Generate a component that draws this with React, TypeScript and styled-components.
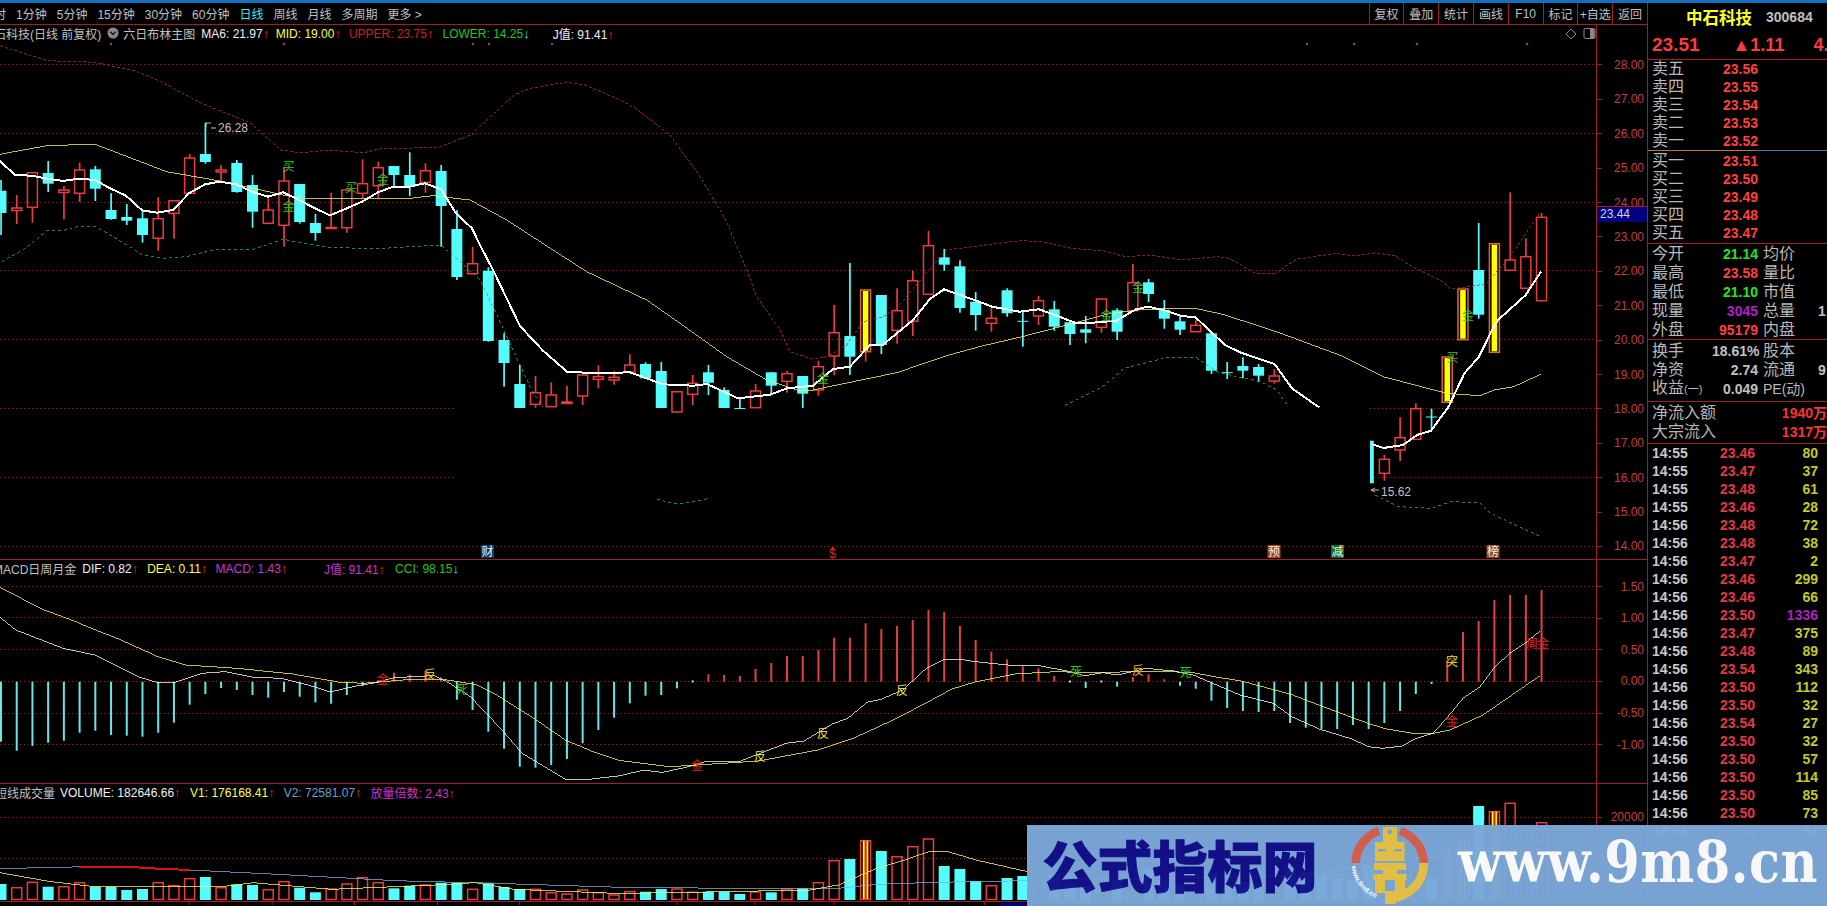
import React from "react";
import styled, { createGlobalStyle } from "styled-components";

// [index, kind, body top, body bottom, wick high, wick low] in page pixels
type Kind = "c" | "r" | "y";
type Candle = [number, Kind, number, number, number, number];

const candles: Candle[] = [
  [0, "c", 190.7, 213, 180, 235], [1, "r", 208, 210.5, 195, 224], [2, "r", 172.7, 207.3, 172.7, 222.7],
  [3, "c", 173, 183.7, 161, 192], [4, "r", 190, 192.5, 186, 219.3], [5, "r", 170, 193.3, 162.7, 202],
  [6, "c", 169.3, 188.7, 166, 201], [7, "c", 210, 219, 193.3, 219.7], [8, "c", 217, 220.7, 204, 225],
  [9, "c", 218.3, 235, 210, 242.7], [10, "r", 218.7, 238.3, 197.3, 250.7], [11, "r", 200.7, 213.3, 200.7, 238.7],
  [12, "r", 158, 193.3, 154, 193.3], [13, "c", 154, 162, 122.7, 163.7], [14, "r", 170, 172, 165, 182.3],
  [15, "c", 163, 192, 160, 192.7], [16, "c", 185, 211.7, 175, 227.7], [17, "r", 210, 223.3, 198.3, 223.3],
  [18, "r", 181, 225.3, 167.3, 246.7], [19, "c", 184, 222, 184, 223.7], [20, "c", 223, 233, 214, 240.7],
  [21, "r", 227.5, 228.5, 193, 228.7], [22, "r", 190, 227.7, 190, 232.7], [23, "r", 183.7, 193.3, 159.3, 198.3],
  [24, "r", 167.7, 185.7, 161.7, 198.3], [25, "c", 166, 175, 166, 186.7], [26, "c", 175, 186.7, 152.3, 196],
  [27, "r", 170.7, 182.3, 163.3, 192.7], [28, "c", 171, 206, 165, 246.7], [29, "c", 229, 277, 210, 280],
  [30, "r", 263.7, 273.7, 246.7, 273.7], [31, "c", 270.7, 341, 267.3, 341.7], [32, "c", 340, 363, 333.3, 386.7],
  [33, "c", 384, 408, 365, 408], [34, "r", 392.7, 404.3, 376, 407.7], [35, "r", 395, 406.7, 382.3, 406.7],
  [36, "r", 402, 403.5, 386, 404], [37, "r", 375, 396, 375, 405], [38, "r", 376.7, 379.3, 365.3, 388.3],
  [39, "r", 377.3, 380, 371.3, 384.7], [40, "r", 365, 372, 354.3, 372], [41, "c", 364, 378.3, 362.3, 378.3],
  [42, "c", 371, 408, 362, 408], [43, "r", 391.7, 412, 391.7, 408], [44, "r", 383.3, 394.3, 375, 405],
  [45, "c", 372.3, 382.7, 365, 395], [46, "c", 390, 408, 387.3, 408], [47, "c", 408, 408, 398, 408],
  [48, "r", 391, 407.7, 384, 407.7], [49, "c", 372.3, 385.7, 372.3, 394], [50, "r", 373.7, 381.3, 370.7, 392.7],
  [51, "c", 376, 393.7, 376, 408], [52, "r", 366.7, 390, 360.7, 395.7], [53, "r", 332.7, 356, 305, 375.3],
  [54, "c", 336, 356.7, 263, 375], [55, "y", 290, 351.7, 290, 361.7], [56, "c", 295, 345, 295, 354],
  [57, "r", 310.7, 330.3, 288.3, 343.7], [58, "r", 280.7, 321.3, 270.7, 336], [59, "r", 245.7, 294.3, 231, 294.3],
  [60, "c", 257.3, 264.7, 249, 270.7], [61, "c", 266.3, 308, 260.3, 312.7], [62, "c", 301.7, 315, 292, 330.7],
  [63, "r", 318.3, 323.3, 308.3, 331.7], [64, "c", 290.3, 313.3, 288.3, 316.7], [65, "c", 320.8, 321.8, 310, 346.7],
  [66, "r", 300.7, 316, 296, 325], [67, "c", 309.3, 326.7, 301, 330.7], [68, "c", 322.3, 334, 321.7, 345],
  [69, "c", 329.3, 332.7, 316, 343.3], [70, "r", 299, 327.3, 299, 332.7], [71, "c", 310.3, 331.7, 308.3, 340],
  [72, "r", 282.7, 310.7, 264, 310.7], [73, "c", 282.3, 294, 279, 302], [74, "c", 310, 318.7, 300, 328.7],
  [75, "c", 321.3, 329.7, 315, 335], [76, "r", 325.3, 331.7, 320, 331.7], [77, "c", 333.3, 370.7, 333.3, 374],
  [78, "c", 372.2, 373.2, 362, 379], [79, "c", 366, 370.7, 357.3, 378.3], [80, "c", 367, 375.7, 364, 381.7],
  [81, "r", 376, 381, 369.3, 383.7],
  [88, "r", 459.3, 473.3, 454.7, 480.7], [89, "r", 437.7, 450, 417.3, 461],
  [90, "r", 408.7, 439.3, 403.3, 439.3], [91, "c", 416.5, 417.5, 408.7, 430.7], [92, "y", 357, 402.3, 357, 402.3],
  [93, "y", 289, 339.7, 289, 339.7], [94, "c", 270, 314.7, 223, 318.7], [95, "y", 243.7, 352.3, 243.7, 352.3],
  [96, "r", 260, 270.3, 192.3, 270.3], [97, "r", 256.7, 288.3, 238.3, 288.3], [98, "r", 217.3, 300.7, 213, 301.5],
];

const macdBars: number[] = [
  741.7, 750.7, 746, 742.7, 740.7, 732.7, 730.7, 735, 735.7, 736.7, 732.7, 722.7, 704.7, 694, 688, 690, 695, 697.7, 692, 696.7,
  702.3, 703.7, 695, 686, 681.7, 672.7, 674.7, 670.7, 677.3, 699.7, 710, 731.7, 748.7, 766.7, 767.7, 765, 759, 743.3, 730, 717.7,
  703.3, 695.7, 695, 688.3, 680, 674.3, 675, 676, 669, 663, 656, 656, 650, 637.7, 637.7, 623.3, 629, 626, 620, 610,
  612, 626, 640, 651.7, 659.3, 666.3, 668.3, 676, 683, 688, 683, 686.7, 677, 674.3, 679.3, 685.7, 688.7, 700.7, 708, 711,
  712, 711, 723, 727.7, 729, 729, 725, 729, 723, 711, 694, 684, 660, 632, 621, 600, 595, 595, 590,
];

const volumeTops: number[] = [
  884, 887.7, 882.3, 886.7, 886.7, 882.7, 886.7, 886.7, 890, 889, 882.7, 885.7, 878.7, 877, 887.7, 884.3, 885, 889.7, 881.7, 887.7,
  892.3, 889, 884, 877.7, 882.7, 888.3, 885.7, 885, 882.7, 882.7, 889.3, 882.7, 887, 889, 889.3, 892.7, 894, 890, 892.7, 895,
  891.7, 891.7, 889, 889, 892.3, 891.7, 891.7, 894, 892, 892.3, 889, 888.3, 882.7, 860.7, 859, 840.7, 851, 856.7, 846.7, 839,
  866, 869, 881, 885.7, 878, 876, 880, 875, 884, 886, 878, 880, 872, 868, 880, 884, 886, 872, 885, 882,
  884, 880, 870, 872, 875, 878, 880, 866, 870, 866, 858, 878, 850, 838, 806, 811.7, 803.3, 830, 822.7,
];

const ma6a = [[0, 161], [15, 175], [32, 175.7], [47, 178.7], [63, 181], [79, 178.7], [95, 180], [110, 188.3], [126, 195.7], [142, 210.3], [157, 212.7], [173, 210], [189, 193.3], [205, 184.3], [220, 181.7], [236, 184.3], [252, 191.7], [268, 196.7], [283, 192.3], [299, 200], [315, 208.3], [330, 215.3], [346, 208.7], [362, 201.7], [378, 192.3], [393, 186.7], [409, 186.7], [425, 183.3], [441, 189.3], [456, 213.3], [472, 228.3], [480, 245], [493, 270], [520, 326], [543, 350.7], [567, 371.7], [597, 373.3], [630, 372.3], [663, 384.3], [693, 385.7], [707, 384], [738, 398.3], [770, 394.7], [787, 388.3], [813, 385.7], [833, 369], [850, 366.7], [870, 344.7], [883, 344.7], [913, 320], [930, 299], [944, 289.3], [980, 302], [992, 306.7], [1019.5, 311.7], [1039, 309.3], [1055, 315], [1075, 322.7], [1085, 323.3], [1116.4, 320.7], [1136, 309.3], [1148, 306.7], [1166, 310.7], [1181.7, 316], [1195.5, 317.3], [1225, 345], [1241, 352.7], [1274.6, 364], [1292, 388.3], [1319, 407.3]];
const ma6b = [[1371.5, 444], [1383.3, 448], [1403, 445], [1417, 435], [1431, 430.7], [1448.6, 406.7], [1464.4, 373.3], [1479, 356.7], [1492, 330], [1498, 320], [1525.7, 295], [1541, 271.7]];
const mid = [[0, 154.3], [46.7, 145.7], [60, 145.7], [76.7, 144.3], [95, 144.3], [166.7, 171.7], [220, 181], [283, 195], [303, 198.3], [410, 198.3], [433, 195.7], [470, 200], [506.7, 220], [553, 250], [586.7, 271.7], [646.7, 300], [680, 323.3], [726.7, 356.7], [766.7, 380], [796.7, 390], [813, 390], [846.7, 383], [896.7, 372.7], [946.7, 355.7], [980, 346.5], [1022, 336.7], [1067, 325], [1110.5, 313.3], [1138, 310], [1170, 308.3], [1193.5, 308.3], [1225, 315], [1276.6, 331.7], [1343.8, 356.7], [1383, 376.7], [1446.6, 393.3], [1480, 395.7], [1494, 390], [1513.8, 386.7], [1540.7, 374.3]];
const upper = [[0, 45.7], [47.4, 60.7], [95, 62.3], [134.4, 70.7], [154, 78.3], [201.7, 103.3], [251, 123.3], [280.7, 150], [300.5, 152.7], [328, 150], [363.8, 152.7], [379.6, 149], [439, 147.3], [470.5, 135], [514, 95], [530, 88.3], [565.4, 82.3], [585, 85], [620, 100], [635, 108], [670, 135], [699, 175], [726.7, 221.7], [746.7, 270], [756.7, 296.7], [780, 330], [790, 351.7], [813, 359.3], [826.7, 356.7], [846.7, 345], [863, 321.7], [883, 316.7], [896.7, 308.3], [923, 276.7], [946.7, 250], [980, 245.7], [1019.5, 240.7], [1043, 241.7], [1071, 248.3], [1102.6, 250.7], [1126, 256.7], [1150, 255], [1181.7, 260], [1217, 256.7], [1229, 258.3], [1256.8, 274], [1276.6, 273], [1296, 259.3], [1336, 253.3], [1355.6, 256], [1375.4, 252.7], [1395, 256], [1415, 268.3], [1442.6, 281.7], [1450.5, 289.3], [1486, 284], [1510, 256.7], [1540.7, 211.7]];
const lowerParts = [
  [[1.7, 261.7], [23, 250], [46.7, 230.7], [63, 230.7], [76.7, 226.7], [96.7, 226.7], [143, 255], [163, 258.3], [186.7, 256.7], [213, 250], [253, 249.3], [283, 239.3], [326.7, 247.3], [376.7, 248.7], [440, 245], [456.7, 258.3], [480, 280], [493, 306.7], [510, 343.3], [533, 393.3], [543, 406.7]],
  [[656.7, 499.3], [676.7, 504], [696.7, 500.7], [710, 498.3]],
  [[1065, 405.7], [1102.6, 386.7], [1124.3, 368.3], [1146, 362.7], [1165.8, 357.7], [1195.5, 357.3], [1217.2, 371.7], [1237, 376.7], [1260.7, 381.7], [1276.6, 390], [1288.4, 406.7]],
  [[1375.4, 495], [1391, 503.3], [1399, 506.7], [1430.8, 508.3], [1450.5, 501.7], [1480, 502.7], [1490, 513.3], [1540.7, 536.7]],
];
const dif = [[0, 617.3], [15.8, 630], [63, 648.3], [95, 655], [138, 676.7], [158, 682.7], [174, 682.7], [201.7, 673.3], [225, 671.7], [253, 677.3], [280.7, 678.3], [308.4, 685], [330, 692], [356, 686], [375.6, 682.7], [395.4, 677.3], [419, 676.7], [433, 675], [447, 681.7], [470.5, 696.7], [502, 730], [522, 753.3], [565.4, 779.3], [589, 779.3], [620, 775.8], [643.7, 770], [661.5, 772.3], [691, 766], [707, 761], [740.6, 761], [786, 743.3], [804, 741], [833.5, 723.3], [849, 717.3], [867, 702.3], [881, 699.3], [902.7, 690], [926.4, 668.3], [944, 659.3], [960, 659.3], [976, 661.7], [1007.5, 665], [1039, 665.7], [1070.8, 671.7], [1084.6, 675.7], [1102.4, 672.7], [1118, 675], [1146, 668.3], [1173.6, 671], [1193.4, 675], [1240, 695], [1273.3, 703.3], [1291.7, 716.7], [1320, 729.3], [1353, 739.3], [1368, 746.7], [1383, 748.3], [1401.7, 746], [1416.7, 738.3], [1433, 733.3], [1446.7, 718.3], [1463, 698.3], [1480, 686.7], [1495, 666.7], [1510, 653.3], [1525, 643.3], [1540, 631]];
const dea = [[0, 587.3], [43.5, 610], [79, 623.3], [118.6, 639], [158, 656.7], [185.8, 665], [237, 668.3], [292.6, 674], [340, 682.3], [363.8, 683.3], [403.3, 680], [443, 679.3], [474.5, 684.3], [502, 698.3], [533.8, 718.3], [565.4, 740], [593, 751.7], [620, 760.5], [669.4, 766.7], [697, 765], [758.4, 761], [817.7, 750], [853.3, 738.3], [896.8, 718.3], [928.4, 701.7], [952, 689], [976, 681.7], [1015.4, 674], [1055, 671.7], [1094.5, 672.7], [1153.8, 671], [1193.4, 672.7], [1220, 677.7], [1240, 680.7], [1290, 694], [1336.7, 711.7], [1370, 724], [1386.7, 729], [1413.3, 733.3], [1433, 733.3], [1450, 730], [1483, 715], [1540, 675.7]];
const v1 = [[0, 872.7], [51, 881.7], [95, 886.7], [221, 886.7], [253, 882.7], [300, 886.7], [332, 889.3], [435, 885], [474.5, 882.7], [514, 889.3], [573, 891.7], [620, 893.5], [691, 892.3], [810, 890], [837.5, 885], [857, 876.7], [877, 868.3], [904.7, 860], [928.4, 851.7], [948, 851.7], [976, 860], [1027, 871.5], [1100, 880], [1300, 875], [1480, 850], [1540, 840]];
const v2 = [[0, 868.3], [55, 867.7], [79, 866.7], [126.5, 866.7], [190, 870], [276.8, 874.3], [395.4, 880.7], [494, 883.3], [620, 887.3], [730.7, 888.3], [837.5, 888.3], [877, 884.3], [936, 882.3], [1027, 880.7], [1300, 876], [1540, 865]];
const v2Red = [[79, 866.7], [126.5, 866.7], [155, 868.5], [190, 870]];

const purpleDots = [110, 283, 472, 488, 551, 1306, 1353, 1416, 1526];
const mainSignals: [string, number, number][] = [
  ["买", 288.6, 166.7], ["金", 288.6, 206.7], ["买", 351, 188], ["金", 382.8, 180], ["金", 823, 379],
  ["金", 1106.5, 315.7], ["金", 1138, 287.7], ["金", 1468, 316], ["买", 1452.5, 357.7],
];
const macdSignals: [string, number, number, string][] = [
  ["金", 382.8, 680, "#e02020"], ["反", 430, 675, "#e8c020"], ["死", 461.8, 690, "#30c020"], ["金", 697, 766, "#e02020"],
  ["反", 760, 756.7, "#e8e040"], ["反", 823, 734.3, "#e8e040"], ["反", 902, 691.3, "#e8e040"], ["死", 1076, 672, "#30c020"],
  ["反", 1138, 670.7, "#e8a020"], ["死", 1185.4, 673, "#30c020"], ["突", 1452, 661.7, "#e8e040"], ["金", 1452, 722, "#e02020"],
  ["周", 1532, 643.7, "#e02020"], ["金", 1543, 643.7, "#e02020"],
];
const badges: [string, number, string][] = [["财", 487.5, "#0b3a6c"], ["预", 1274, "#a8431c"], ["减", 1337.5, "#0a6a1a"], ["榜", 1493, "#8a4a1c"]];
const dateTicks = [188.6, 271.6, 354, 437, 518.8, 676.5, 754.4, 833.5, 908.7, 983.8];

const mainPrices = ["28.00", "27.00", "26.00", "25.00", "24.00", "23.00", "22.00", "21.00", "20.00", "19.00", "18.00", "17.00", "16.00", "15.00", "14.00"];
const macdPrices = ["1.50", "1.00", "0.50", "0.00", "-0.50", "-1.00"];
const tabs = ["时", "1分钟", "5分钟", "15分钟", "30分钟", "60分钟", "日线", "周线", "月线", "多周期", "更多 >"];
const tools = ["复权", "叠加", "统计", "画线", "F10", "标记", "+自选", "返回"];
const asks = [["卖五", "23.56"], ["卖四", "23.55"], ["卖三", "23.54"], ["卖二", "23.53"], ["卖一", "23.52"]];
const bids = [["买一", "23.51"], ["买二", "23.50"], ["买三", "23.49"], ["买四", "23.48"], ["买五", "23.47"]];
const stats = [
  ["今开", "21.14", "#22e622", "均价", ""], ["最高", "23.58", "#ff4040", "量比", ""], ["最低", "21.10", "#22e622", "市值", ""],
  ["现量", "3045", "#b020c8", "总量", "1"], ["外盘", "95179", "#ff4040", "内盘", ""],
];
const trades: [string, string, string][] = [
  ["14:55", "23.46", "80"], ["14:55", "23.47", "37"], ["14:55", "23.48", "61"], ["14:55", "23.46", "28"], ["14:56", "23.48", "72"],
  ["14:56", "23.48", "38"], ["14:56", "23.47", "2"], ["14:56", "23.46", "299"], ["14:56", "23.46", "66"], ["14:56", "23.50", "1336"],
  ["14:56", "23.47", "375"], ["14:56", "23.48", "89"], ["14:56", "23.54", "343"], ["14:56", "23.50", "112"], ["14:56", "23.50", "32"],
  ["14:56", "23.54", "27"], ["14:56", "23.50", "32"], ["14:56", "23.50", "57"], ["14:56", "23.50", "114"], ["14:56", "23.50", "85"],
  ["14:56", "23.50", "73"], ["14:56", "23.50", "51"],
];

const CYAN = "#55fcfc";
const RED = "#ee3a3e";
const THIN = 0.75;
const candleX = (i: number) => 15.72 * i + 1;
const pts = (a: number[][]) => a.map(p => p.join(",")).join(" ");
const kindOf = (i: number): Kind => candles.find(c => c[0] === i)?.[1] ?? "c";

const GridLines = ({ ys, from = 0, to = 1596 }: { ys: number[], from?: number, to?: number }) => (
  <>{ys.map(y => <line key={y} x1={from} x2={to} y1={Math.floor(y) + 0.5} y2={Math.floor(y) + 0.5} stroke="#9a2020" strokeDasharray="1 3" />)}</>
)

const CandleMark = ({ c }: { c: Candle }) => {
  const [i, kind, top, bot, hi, lo] = c
  const x = candleX(i)
  if (kind === "c") {
    return (
      <g fill={CYAN}>
        <rect x={x - 0.8} y={hi} width={1.7} height={lo - hi} />
        <rect x={x - 5.5} y={top} width={11} height={Math.max(bot - top, 1)} />
      </g>
    )
  }
  return (
    <g>
      <rect x={x - 0.8} y={hi} width={1.7} height={top - hi} fill={RED} />
      <rect x={x - 0.8} y={bot} width={1.7} height={Math.max(lo - bot, 0)} fill={RED} />
      <rect x={x - 5} y={top} width={10} height={bot - top} fill="none" stroke={kind === "y" ? "#e8603a" : RED} strokeWidth={1.5} />
      {kind === "y" && <rect x={x - 2.8} y={top + 1} width={5.6} height={bot - top - 2} fill="#ffff00" />}
    </g>
  )
}

const VolumeBar = ({ i, top }: { i: number, top: number }) => {
  const x = candleX(i)
  const kind = kindOf(i)
  if (kind === "c") return <rect x={x - 5.5} y={top} width={11} height={900 - top} fill={CYAN} />
  return (
    <g>
      <rect x={x - 5} y={top} width={10} height={899.5 - top} fill="none" stroke={RED} strokeWidth={1.5} />
      {kind === "y" && <rect x={x - 2.8} y={top} width={5.6} height={899 - top} fill="#ffff00" />}
      {kind === "y" && <rect x={x - 1} y={top} width={2} height={899 - top} fill="#f01010" />}
    </g>
  )
}

const Axis = ({ labels, rowHeight, first }: { labels: string[], rowHeight: number, first: number }) => (
  <AxisColumn $first={first}>
    {labels.map(l => <AxisRow key={l} $h={rowHeight}><Tick />{l}</AxisRow>)}
  </AxisColumn>
)

const LegendValue = ({ color, children, down, gap }: { color: string, children: React.ReactNode, down?: boolean, gap?: number }) => (
  <LegendItem $color={color} $gap={gap}>
    {children}
    <LegendArrow $down={down}>{down ? "↓" : "↑"}</LegendArrow>
  </LegendItem>
)

const LogoMark = () => (
  <LogoSvg viewBox="0 0 100 84" width={100} height={84}>
    <g fill="none" strokeWidth={8.5}>
      <path d="M37 9 A34 34 0 0 0 13.7 41" stroke="#d9604f" />
      <path d="M58 9 A34 34 0 0 1 81.7 41" stroke="#d9604f" />
      <path d="M81.7 41 A34 34 0 0 1 44 75.5" stroke="#e8c448" />
    </g>
    <defs><path id="logoArc" d="M9.5 44 A38 38 0 0 0 42 78" /></defs>
    <LogoText><textPath href="#logoArc">www.9m8.cn</textPath></LogoText>
    <g fill="#e8c448">
      <rect x="41" y="5" width="14" height="16" />
      <rect x="33" y="20" width="29.5" height="19" />
      <rect x="32" y="41" width="32" height="7" />
      <rect x="41" y="48" width="14" height="4" />
      <rect x="31.5" y="52" width="33" height="6" />
      <rect x="33" y="58" width="10" height="13" />
      <rect x="53" y="58" width="10" height="13" />
      <rect x="43" y="69" width="11" height="13" />
    </g>
    <g fill="#7ba8d8">
      <circle cx="47.7" cy="10" r="2.4" />
      <rect x="36" y="27" width="7.5" height="2.5" />
      <rect x="52.5" y="27" width="7.5" height="2.5" />
      <path d="M46 60h4l2 9h-8z" />
    </g>
  </LogoSvg>
)

export default function App() {
  return (
    <Page>
      <GlobalStyle />
      <TopStrip />
      <Workspace>
        <ChartColumn>
          <Toolbar>
            <TabList>
              {tabs.map(t => <Tab key={t} $active={t === "日线"}>{t}</Tab>)}
            </TabList>
            <ToolList>
              {tools.map(t => <ToolButton key={t}>{t}</ToolButton>)}
            </ToolList>
          </Toolbar>

          <Pane $h={535}>
            <ChartArea>
              <Legend>
                <LegendName $lead={-6}>石科技(日线 前复权)</LegendName>
                <MenuDot viewBox="0 0 12 12" width={12} height={12}>
                  <circle cx="6" cy="6" r="5.5" fill="#8a8a8a" />
                  <path d="M3.4 4.8 6 7.4 8.6 4.8" fill="none" stroke="#111" strokeWidth="1.4" />
                </MenuDot>
                <LegendName $lead={-4}>六日布林主图</LegendName>
                <LegendValue color="#f0f0f0" gap={-2}>MA6: 21.97</LegendValue>
                <LegendValue color="#ffff40" gap={-1.5}>MID: 19.00</LegendValue>
                <LegendValue color="#d02020">UPPER: 23.75</LegendValue>
                <LegendValue color="#22c422" gap={1} down>LOWER: 14.25</LegendValue>
                <LegendValue color="#f0f0f0" gap={15}>J值: 91.41</LegendValue>
              </Legend>
              <ChartSvg viewBox="0 25 1596 534" width={1596} height={534}>
                <GridLines ys={[64.7, 133.3, 202, 270.5, 339.3, 546.3]} />
                <GridLines ys={[408.3, 477.3]} to={456} />
                <GridLines ys={[408.3, 477.3]} from={1370} />
                {purpleDots.map(x => <rect key={x} x={x} y={43} width={2} height={2} fill="#a030c0" />)}

                {candles.map(c => <CandleMark key={c[0]} c={c} />)}
                <rect x={1370} y={440.7} width={3.8} height={42.6} fill={CYAN} />

                <polyline points={pts(upper)} fill="none" stroke="#c02428" strokeWidth={THIN} strokeDasharray="3 2" />
                {lowerParts.map((p, n) => <polyline key={n} points={pts(p)} fill="none" stroke="#2cc02c" strokeWidth={THIN} strokeDasharray="3 3" />)}
                <polyline points={pts(mid)} fill="none" stroke="#ffff50" strokeWidth={THIN} />
                <polyline points={pts(ma6a)} fill="none" stroke="#fff" strokeWidth={2} />
                <polyline points={pts(ma6b)} fill="none" stroke="#fff" strokeWidth={2} />

                {mainSignals.map(([t, x, y], n) => <SignalText key={n} x={x} y={y} fill="#38c41c">{t}</SignalText>)}

                <path d="M206 123h5M206 123v4M211 128h5" fill="none" stroke="#bbb" />
                <PriceNote x={218} y={132}>26.28</PriceNote>
                <path d="M1371 490l4-2M1371 490h8M1371 490l4 2" fill="none" stroke="#bbb" />
                <PriceNote x={1381} y={496}>15.62</PriceNote>

                {badges.map(([t, x, bg]) => (
                  <g key={t}>
                    <rect x={x - 6.5} y={545} width={13} height={13} fill={bg} />
                    <BadgeText x={x} y={551.5}>{t}</BadgeText>
                  </g>
                ))}
                <path d="M832.7 546.5l2.5 3h-5z" fill="#e02020" />
                <BadgeText x={832.7} y={553.5} $color="#e02020">$</BadgeText>
              </ChartSvg>
            </ChartArea>
            <AxisWrap>
              <Axis labels={mainPrices} rowHeight={34.4} first={22.8} />
              <PriceTag>23.44</PriceTag>
              <CornerIcons viewBox="0 0 40 14" width={40} height={14}>
                <path d="M3 7 8 2 13 7 8 12Z" fill="none" stroke="#888" />
                <rect x="21" y="1.5" width="11" height="10" rx="1.5" fill="none" stroke="#888" />
                <rect x="27" y="2" width="4.5" height="9" fill="#888" />
              </CornerIcons>
            </AxisWrap>
          </Pane>

          <Pane $h={224}>
            <ChartArea>
              <Legend>
                <LegendName $lead={-7}>MACD日周月金</LegendName>
                <LegendValue color="#f0f0f0" gap={-2}>DIF: 0.82</LegendValue>
                <LegendValue color="#ffff40" gap={1}>DEA: 0.11</LegendValue>
                <LegendValue color="#d030d0">MACD: 1.43</LegendValue>
                <LegendValue color="#d030d0" gap={28.5}>J值: 91.41</LegendValue>
                <LegendValue color="#22c422" gap={2} down>CCI: 98.15</LegendValue>
              </Legend>
              <ChartSvg viewBox="0 560 1596 223" width={1596} height={223}>
                <GridLines ys={[586.5, 617.7, 649.7, 681.7, 713.5, 744.5]} />
                {macdBars.map((y, i) => {
                  if (Math.abs(y - 681.7) < 2) return <rect key={i} x={candleX(i) - 1} y={680.5} width={2} height={2} fill="#ddd" />
                  return <rect key={i} x={candleX(i) - 1} y={Math.min(y, 681.7)} width={2} height={Math.abs(y - 681.7)} fill={y < 681.7 ? "#e4403f" : "#66e6e6"} />
                })}
                <polyline points={pts(dea)} fill="none" stroke="#ffff50" strokeWidth={THIN} />
                <polyline points={pts(dif)} fill="none" stroke="#fff" strokeWidth={THIN} />
                {macdSignals.map(([t, x, y, c], n) => <SignalText key={n} x={x} y={y} fill={c}>{t}</SignalText>)}
              </ChartSvg>
            </ChartArea>
            <AxisWrap>
              <Axis labels={macdPrices} rowHeight={31.6} first={10.9} />
            </AxisWrap>
          </Pane>

          <Pane $h={118}>
            <ChartArea>
              <Legend>
                <LegendName $lead={-5}>短线成交量</LegendName>
                <LegendValue color="#f0f0f0" gap={-3}>VOLUME: 182646.66</LegendValue>
                <LegendValue color="#ffff40" gap={1.5}>V1: 176168.41</LegendValue>
                <LegendValue color="#6aa0d0" gap={1}>V2: 72581.07</LegendValue>
                <LegendValue color="#d030d0" gap={1}>放量倍数: 2.43</LegendValue>
              </Legend>
              <ChartSvg viewBox="0 784 1596 117" width={1596} height={117}>
                <GridLines ys={[817.7, 858.3]} />
                {volumeTops.map((top, i) => <VolumeBar key={i} i={i} top={top} />)}
                <polyline points={pts(v2)} fill="none" stroke="#7ab0e0" strokeWidth={THIN} />
                <polyline points={pts(v2Red)} fill="none" stroke="#e01010" strokeWidth={2} />
                <polyline points={pts(v1)} fill="none" stroke="#ffff50" strokeWidth={THIN} />
              </ChartSvg>
            </ChartArea>
            <AxisWrap>
              <Axis labels={["20000"]} rowHeight={20} first={23.3} />
            </AxisWrap>
          </Pane>

          <DateAxis viewBox="0 902 1647 4" width={1647} height={4}>
            {dateTicks.map(x => <rect key={x} x={x} y={902} width={1} height={3} fill="#a51d24" />)}
            <rect x={1000} y={903} width={27} height={3} fill="#000080" />
          </DateAxis>
        </ChartColumn>

        <SidePanel>
          <StockTitle>
            <StockName>中石科技</StockName>
            <StockCode>300684</StockCode>
          </StockTitle>
          <PriceRow>
            <BigPrice>23.51</BigPrice>
            <BigChange>▲1.11</BigChange>
            <BigChange>4.95%</BigChange>
          </PriceRow>

          <Book>
            {asks.map(([l, v]) => <BookRow key={l}><SideLabel>{l}</SideLabel><SideValue $color="#ff4040">{v}</SideValue></BookRow>)}
          </Book>
          <BookDivider />
          <Book $pad>
            {bids.map(([l, v]) => <BookRow key={l}><SideLabel>{l}</SideLabel><SideValue $color="#ff4040">{v}</SideValue></BookRow>)}
          </Book>

          <Section>
            {stats.map(([a, v, c, b, e]) => (
              <StatRow key={a}><SideLabel>{a}</SideLabel><SideValue $color={c}>{v}</SideValue><SideLabel $pad>{b}</SideLabel><SideValue $color="#c0c0c0" $left>{e}</SideValue></StatRow>
            ))}
          </Section>
          <Section $top={1} $bottom={3}>
            <StatRow><SideLabel>换手</SideLabel><SideValue $color="#c0c0c0">18.61%</SideValue><SideLabel $pad>股本</SideLabel><span /></StatRow>
            <StatRow><SideLabel>净资</SideLabel><SideValue $color="#c0c0c0">2.74</SideValue><SideLabel $pad>流通</SideLabel><SideValue $color="#c0c0c0" $left>9</SideValue></StatRow>
            <StatRow><SideLabel>收益<NarrowPart>(一)</NarrowPart></SideLabel><SideValue $color="#c0c0c0">0.049</SideValue><SideLabel $pad $small>PE(动)</SideLabel><span /></StatRow>
          </Section>
          <Section $top={1} $bottom={2}>
            <FlowRow><SideLabel>净流入额</SideLabel><SideValue $color="#ff3030">1940万</SideValue></FlowRow>
            <FlowRow><SideLabel>大宗流入</SideLabel><SideValue $color="#ff3030">1317万</SideValue></FlowRow>
          </Section>

          <Section>
            {trades.map(([t, p, v], n) => (
              <TradeRow key={n}>
                <SideValue $color="#c8c8c8" $left>{t}</SideValue>
                <SideValue $color="#e03a44">{p}</SideValue>
                <SideValue $color={v === "1336" ? "#b020c0" : "#c4c828"}>{v}</SideValue>
              </TradeRow>
            ))}
          </Section>
        </SidePanel>
      </Workspace>

      <Watermark>
        <WatermarkTitle>公式指标网</WatermarkTitle>
        <LogoMark />
        <WatermarkUrl>www.9m8.cn</WatermarkUrl>
      </Watermark>
    </Page>
  )
}

const FONT = `"Liberation Sans", "Noto Sans CJK SC", sans-serif`
const LINE = "#a51d24"

const GlobalStyle = createGlobalStyle`
  html, body { margin: 0; padding: 0; background: #000; overflow: hidden; }
  * { box-sizing: border-box; }
`

const Page = styled.div`
  position: relative;
  width: 1827px;
  height: 906px;
  overflow: hidden;
  background: #000;
  color: #c0c0c0;
  font-family: ${FONT};
`

const TopStrip = styled.div`
  height: 3px;
  background: #1470bc;
`

const Workspace = styled.div`
  display: flex;
  height: 903px;
`

const ChartColumn = styled.div`
  width: 1647px;
  display: flex;
  flex-direction: column;
  overflow: hidden;
`

const Toolbar = styled.div`
  height: 22px;
  display: flex;
  justify-content: space-between;
  border-bottom: 1px solid ${LINE};
`

const TabList = styled.div`
  display: flex;
  align-items: center;
  gap: 10px;
  margin-left: -6px;
`

const Tab = styled.span<{ $active?: boolean }>`
  font-size: 12px;
  white-space: nowrap;
  color: ${p => p.$active ? "#3fe8f0" : "#c0c0c0"};
`

const ToolList = styled.div`
  display: flex;
`

const ToolButton = styled.div`
  width: 34.8px;
  font-size: 12px;
  display: flex;
  align-items: center;
  justify-content: center;
  border-left: 1px solid ${LINE};
  white-space: nowrap;
`

const Pane = styled.div<{ $h: number }>`
  height: ${p => p.$h}px;
  display: flex;
  border-bottom: 1px solid ${LINE};
`

const ChartArea = styled.div`
  position: relative;
  width: 1596px;
  overflow: hidden;
`

const ChartSvg = styled.svg`
  display: block;
  font-family: ${FONT};
  polyline { shape-rendering: crispEdges; }
`

const Legend = styled.div`
  position: absolute;
  top: 0;
  left: 0;
  height: 16px;
  display: flex;
  align-items: center;
  gap: 8px;
  font-size: 12px;
  white-space: nowrap;
  z-index: 1;
`

const LegendName = styled.span<{ $lead?: number }>`
  font-size: 12px;
  color: #c0c0c0;
  margin-left: ${p => p.$lead ?? 0}px;
`

const LegendItem = styled.span<{ $color: string, $gap?: number }>`
  color: ${p => p.$color};
  margin-left: ${p => p.$gap ?? 0}px;
`

const LegendArrow = styled.span<{ $down?: boolean }>`
  color: ${p => p.$down ? "#3fe8f0" : "#f03030"};
  font-size: 13px;
  font-weight: 700;
`

const MenuDot = styled.svg`
  margin-left: -2px;
  flex: none;
`

const SignalText = styled.text`
  font-size: 12px;
  text-anchor: middle;
  dominant-baseline: central;
`

const PriceNote = styled.text`
  font-size: 12px;
  fill: #c0c0c0;
`

const BadgeText = styled.text<{ $color?: string }>`
  font-size: 12px;
  text-anchor: middle;
  dominant-baseline: central;
  fill: ${p => p.$color ?? "#f0f0f0"};
`

const AxisWrap = styled.div`
  position: relative;
  width: 51px;
  border-left: 1px solid ${LINE};
`

const AxisColumn = styled.div<{ $first: number }>`
  padding-top: ${p => p.$first}px;
`

const AxisRow = styled.div<{ $h: number }>`
  height: ${p => p.$h}px;
  display: flex;
  align-items: center;
  justify-content: space-between;
  padding-right: 3px;
  font-size: 12px;
  color: #c83c40;
`

const Tick = styled.i`
  width: 5px;
  height: 1px;
  background: ${LINE};
`

const PriceTag = styled.div`
  position: absolute;
  top: 180.5px;
  left: 0;
  width: 50px;
  height: 16px;
  line-height: 15px;
  padding-left: 3px;
  font-size: 12px;
  color: #d0d0ff;
  background: #000080;
  border-top: 1px solid #a51d24;
`

const CornerIcons = styled.svg`
  position: absolute;
  top: 2px;
  left: -34px;
`

const DateAxis = styled.svg`
  display: block;
`

const SidePanel = styled.div`
  width: 180px;
  border-left: 1px solid ${LINE};
  overflow: hidden;
`

const StockTitle = styled.div`
  height: 28px;
  display: flex;
  align-items: center;
  padding-left: 38px;
  gap: 14px;
`

const StockName = styled.span`
  font-size: 16.5px;
  font-weight: 700;
  color: #ffff20;
  white-space: nowrap;
`

const StockCode = styled.span`
  font-size: 14px;
  font-weight: 700;
  color: #c0c0c0;
`

const PriceRow = styled.div`
  height: 29px;
  display: flex;
  align-items: center;
  padding-left: 4px;
  gap: 33px;
  color: #ff3a3a;
  border-bottom: 1px solid ${LINE};
  white-space: nowrap;
`

const BigPrice = styled.span`
  font-size: 19px;
  font-weight: 700;
`

const BigChange = styled.span`
  font-size: 18px;
  font-weight: 700;
  &:last-child { margin-left: -4px; }
`

const Book = styled.div<{ $pad?: boolean }>`
  padding: ${p => p.$pad ? "1px 0 1px" : "0"};
`

const BookDivider = styled.div`
  height: 1px;
  background: linear-gradient(90deg, #c07a30 0%, #c07a30 60%, #3f78c8 60%, #3f78c8 100%);
`

const Section = styled.div<{ $top?: number, $bottom?: number }>`
  border-top: 1px solid ${LINE};
  padding: ${p => p.$top ?? 0}px 0 ${p => p.$bottom ?? 0}px;
`

const BookRow = styled.div`
  height: 18px;
  padding-left: 4px;
  display: grid;
  grid-template-columns: 60px 46px;
  align-items: center;
`

const StatRow = styled.div`
  height: 19px;
  padding-left: 4px;
  display: grid;
  grid-template-columns: 60px 46px 60px 10px;
  align-items: center;
`

const FlowRow = styled.div`
  height: 19px;
  padding-left: 4px;
  display: flex;
  justify-content: space-between;
  align-items: center;
`

const TradeRow = styled.div`
  height: 18px;
  padding-left: 4px;
  display: grid;
  grid-template-columns: 60px 43px 63px;
  align-items: center;
`

const SideLabel = styled.span<{ $pad?: boolean, $small?: boolean }>`
  font-size: ${p => p.$small ? 14 : 16}px;
  line-height: 18px;
  color: #b8b8b8;
  white-space: nowrap;
  padding-left: ${p => p.$pad ? 5 : 0}px;
`

const NarrowPart = styled.span`
  font-size: 11px;
`

const SideValue = styled.span<{ $color: string, $left?: boolean }>`
  font-size: 14px;
  line-height: 18px;
  font-weight: 700;
  color: ${p => p.$color};
  text-align: ${p => p.$left ? "left" : "right"};
  white-space: nowrap;
`

const Watermark = styled.div`
  position: absolute;
  left: 1027px;
  top: 825px;
  width: 800px;
  height: 81px;
  display: flex;
  align-items: center;
  padding-left: 15.5px;
  background: #7ba8d8;
  opacity: 0.97;
`

const WatermarkTitle = styled.div`
  width: 299.5px;
  margin-top: -6px;
  font-size: 55px;
  font-weight: 900;
  line-height: 60px;
  white-space: nowrap;
  color: #14108c;
  -webkit-text-stroke: 1px #14108c;
  font-family: "Noto Sans CJK SC", sans-serif;
`

const LogoSvg = styled.svg`
  flex: none;
  margin-top: -3px;
`

const LogoText = styled.text`
  font-size: 7px;
  font-weight: 700;
  fill: #fff;
`

const WatermarkUrl = styled.div`
  margin-left: 16px;
  margin-top: -7px;
  font-family: "DejaVu Serif", serif;
  font-size: 51px;
  font-weight: 900;
  letter-spacing: 0.5px;
  line-height: 60px;
  color: #fff;
  white-space: nowrap;
  transform: scaleY(1.12);
`
